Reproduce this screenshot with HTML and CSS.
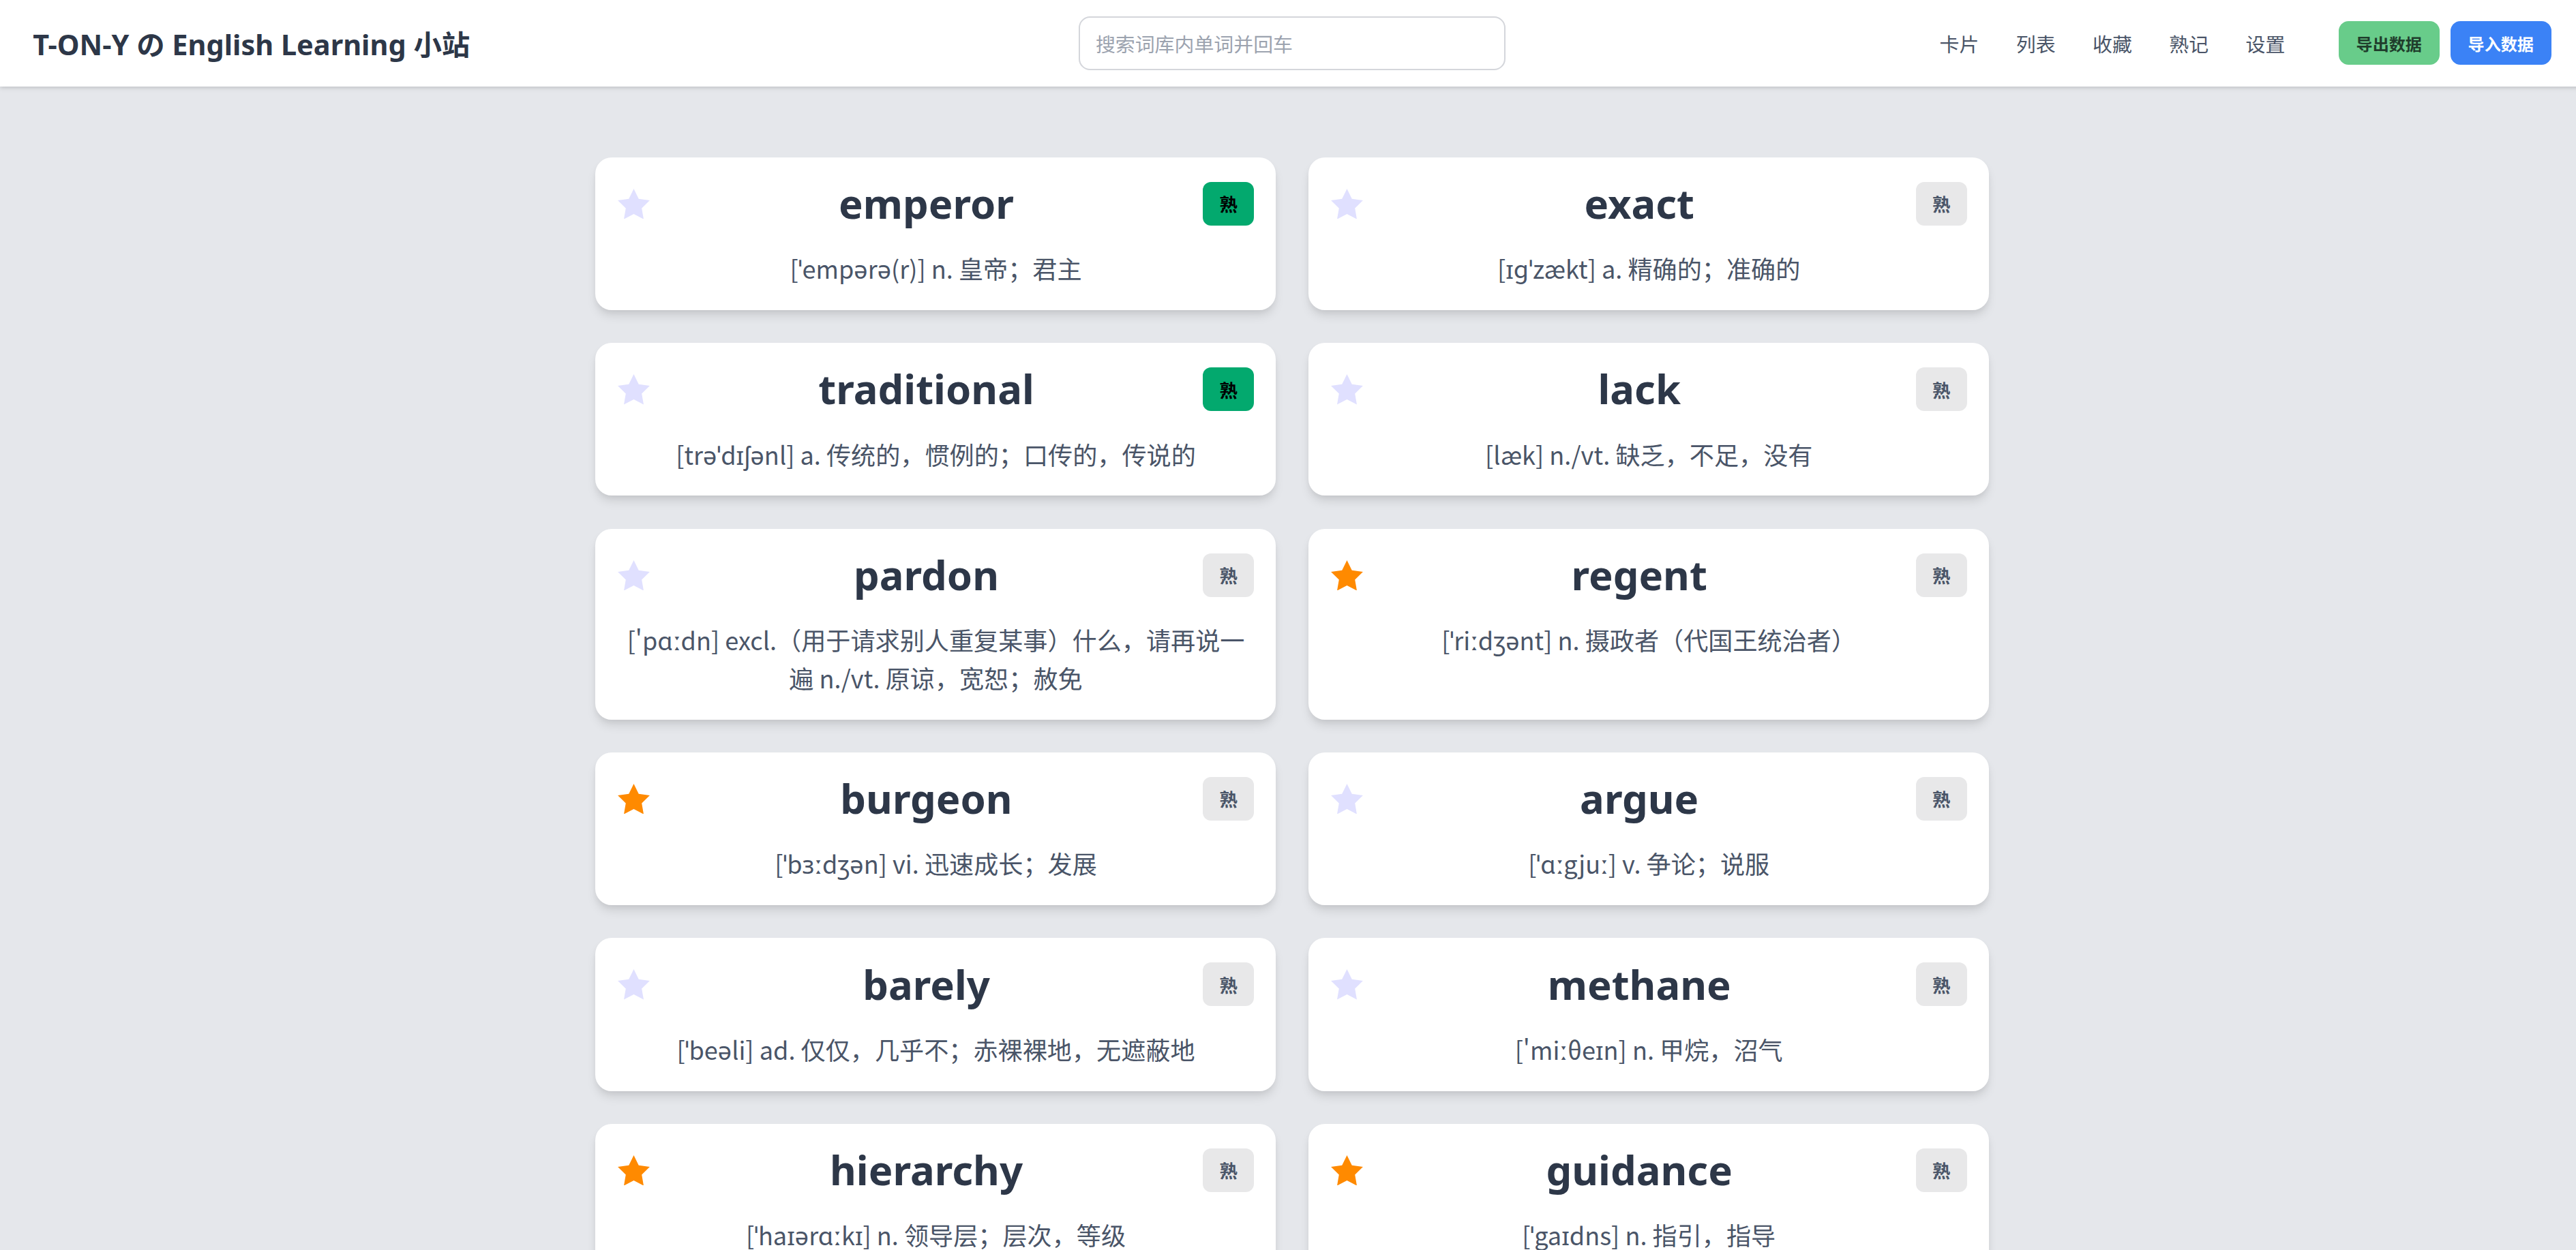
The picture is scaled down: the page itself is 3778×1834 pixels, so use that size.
FILE: index.html
```html
<!DOCTYPE html>
<html lang="zh-CN">
<head>
<meta charset="utf-8">
<title>T-ON-Y の English Learning 小站</title>
<link rel="stylesheet" href="styles.css">
</head>
<body>
<header class="topbar">
  <div class="brand">T-ON-Y の English Learning 小站</div>
  <div class="search-wrap">
    <input class="search" type="text" placeholder="搜索词库内单词并回车">
  </div>
  <div class="actions">
    <nav class="nav">
      <span>卡片</span><span>列表</span><span>收藏</span><span>熟记</span><span>设置</span>
    </nav>
    <button class="btn btn-export">导出数据</button>
    <button class="btn btn-import">导入数据</button>
  </div>
</header>

<main class="board">
  <div class="card">
    <div class="card-head">
      <svg class="star" viewBox="2 2 20 19.02"><polygon points="12,2 15.09,8.26 22,9.27 17,14.14 18.18,21.02 12,17.77 5.82,21.02 7,14.14 2,9.27 8.91,8.26"/></svg>
      <div class="word">emperor</div>
      <div class="badge on">熟</div>
    </div>
    <div class="def">[ˈempərə(r)] n. 皇帝；君主</div>
  </div>
  <div class="card">
    <div class="card-head">
      <svg class="star" viewBox="2 2 20 19.02"><polygon points="12,2 15.09,8.26 22,9.27 17,14.14 18.18,21.02 12,17.77 5.82,21.02 7,14.14 2,9.27 8.91,8.26"/></svg>
      <div class="word">exact</div>
      <div class="badge">熟</div>
    </div>
    <div class="def">[ɪɡˈzækt] a. 精确的；准确的</div>
  </div>

  <div class="card">
    <div class="card-head">
      <svg class="star" viewBox="2 2 20 19.02"><polygon points="12,2 15.09,8.26 22,9.27 17,14.14 18.18,21.02 12,17.77 5.82,21.02 7,14.14 2,9.27 8.91,8.26"/></svg>
      <div class="word">traditional</div>
      <div class="badge on">熟</div>
    </div>
    <div class="def">[trəˈdɪʃənl] a. 传统的，惯例的；口传的，传说的</div>
  </div>
  <div class="card">
    <div class="card-head">
      <svg class="star" viewBox="2 2 20 19.02"><polygon points="12,2 15.09,8.26 22,9.27 17,14.14 18.18,21.02 12,17.77 5.82,21.02 7,14.14 2,9.27 8.91,8.26"/></svg>
      <div class="word">lack</div>
      <div class="badge">熟</div>
    </div>
    <div class="def">[læk] n./vt. 缺乏，不足，没有</div>
  </div>

  <div class="card">
    <div class="card-head">
      <svg class="star" viewBox="2 2 20 19.02"><polygon points="12,2 15.09,8.26 22,9.27 17,14.14 18.18,21.02 12,17.77 5.82,21.02 7,14.14 2,9.27 8.91,8.26"/></svg>
      <div class="word">pardon</div>
      <div class="badge">熟</div>
    </div>
    <div class="def">['pɑːdn] excl.（用于请求别人重复某事）什么，请再说一遍 n./vt. 原谅，宽恕；赦免</div>
  </div>
  <div class="card">
    <div class="card-head">
      <svg class="star on" viewBox="2 2 20 19.02"><polygon points="12,2 15.09,8.26 22,9.27 17,14.14 18.18,21.02 12,17.77 5.82,21.02 7,14.14 2,9.27 8.91,8.26"/></svg>
      <div class="word">regent</div>
      <div class="badge">熟</div>
    </div>
    <div class="def">[ˈriːdʒənt] n. 摄政者（代国王统治者）</div>
  </div>

  <div class="card">
    <div class="card-head">
      <svg class="star on" viewBox="2 2 20 19.02"><polygon points="12,2 15.09,8.26 22,9.27 17,14.14 18.18,21.02 12,17.77 5.82,21.02 7,14.14 2,9.27 8.91,8.26"/></svg>
      <div class="word">burgeon</div>
      <div class="badge">熟</div>
    </div>
    <div class="def">[ˈbɜːdʒən] vi. 迅速成长；发展</div>
  </div>
  <div class="card">
    <div class="card-head">
      <svg class="star" viewBox="2 2 20 19.02"><polygon points="12,2 15.09,8.26 22,9.27 17,14.14 18.18,21.02 12,17.77 5.82,21.02 7,14.14 2,9.27 8.91,8.26"/></svg>
      <div class="word">argue</div>
      <div class="badge">熟</div>
    </div>
    <div class="def">[ˈɑːgjuː] v. 争论；说服</div>
  </div>

  <div class="card">
    <div class="card-head">
      <svg class="star" viewBox="2 2 20 19.02"><polygon points="12,2 15.09,8.26 22,9.27 17,14.14 18.18,21.02 12,17.77 5.82,21.02 7,14.14 2,9.27 8.91,8.26"/></svg>
      <div class="word">barely</div>
      <div class="badge">熟</div>
    </div>
    <div class="def">[ˈbeəli] ad. 仅仅，几乎不；赤裸裸地，无遮蔽地</div>
  </div>
  <div class="card">
    <div class="card-head">
      <svg class="star" viewBox="2 2 20 19.02"><polygon points="12,2 15.09,8.26 22,9.27 17,14.14 18.18,21.02 12,17.77 5.82,21.02 7,14.14 2,9.27 8.91,8.26"/></svg>
      <div class="word">methane</div>
      <div class="badge">熟</div>
    </div>
    <div class="def">['miːθeɪn] n. 甲烷，沼气</div>
  </div>

  <div class="card">
    <div class="card-head">
      <svg class="star on" viewBox="2 2 20 19.02"><polygon points="12,2 15.09,8.26 22,9.27 17,14.14 18.18,21.02 12,17.77 5.82,21.02 7,14.14 2,9.27 8.91,8.26"/></svg>
      <div class="word">hierarchy</div>
      <div class="badge">熟</div>
    </div>
    <div class="def">[ˈhaɪərɑːkɪ] n. 领导层；层次，等级</div>
  </div>
  <div class="card">
    <div class="card-head">
      <svg class="star on" viewBox="2 2 20 19.02"><polygon points="12,2 15.09,8.26 22,9.27 17,14.14 18.18,21.02 12,17.77 5.82,21.02 7,14.14 2,9.27 8.91,8.26"/></svg>
      <div class="word">guidance</div>
      <div class="badge">熟</div>
    </div>
    <div class="def">[ˈgaɪdns] n. 指引，指导</div>
  </div>
</main>
</body>
</html>
```

FILE: styles.css
```css
html {
  zoom: 2.4094;
  overflow: hidden;
}

body {
  margin: 0;
  width: 1573px;
  background: #e5e7eb;
  font-family: "Noto Sans", "Noto Sans CJK SC", sans-serif;
}

.topbar {
  position: relative;
  z-index: 1;
  box-sizing: border-box;
  height: 52.6px;
  padding: 0 20px;
  display: flex;
  align-items: center;
  background: #fff;
  box-shadow: 0 1px 3px rgba(0, 0, 0, 0.12), 0 1px 2px rgba(0, 0, 0, 0.06);
}

.brand,
.search-wrap,
.actions {
  flex: 1 1 0;
  min-width: 0;
}

.brand {
  font-size: 17.2px;
  font-weight: 700;
  color: #2d3748;
  white-space: nowrap;
}

.search-wrap {
  display: flex;
  justify-content: center;
}

.search {
  box-sizing: border-box;
  width: 260px;
  height: 32.5px;
  padding: 0 9.6px;
  border: 1px solid #d4d6db;
  border-radius: 7px;
  font-family: "Noto Sans CJK SC", sans-serif;
  font-size: 12px;
  color: #374151;
  background: #fff;
  outline: none;
}

.search::placeholder {
  color: #9ca3af;
}

.actions {
  display: flex;
  justify-content: flex-end;
  align-items: center;
}

.nav {
  display: flex;
  gap: 22.6px;
  margin-right: 32.5px;
  font-family: "Noto Sans CJK SC", sans-serif;
  font-size: 12px;
  color: #4a5568;
  white-space: nowrap;
}

.btn {
  height: 26.5px;
  padding: 0 10.75px;
  border: 0;
  border-radius: 6px;
  font-family: "Noto Sans CJK SC", sans-serif;
  font-size: 10px;
  font-weight: 700;
  white-space: nowrap;
  cursor: pointer;
}

.btn-export {
  background: #68cc8a;
  color: #1f3d2c;
}

.btn-import {
  margin-left: 6.6px;
  background: #3b82f6;
  color: #fff;
}

.board {
  width: 848px;
  margin: 43.15px auto 0;
  display: grid;
  grid-template-columns: 1fr 1fr;
  gap: 20px;
}

.card {
  padding: 15px 13.2px 13.7px 13.5px;
  background: #fff;
  border-radius: 10px;
  box-shadow: 0 4px 6px -1px rgba(0, 0, 0, 0.1), 0 2px 4px -1px rgba(0, 0, 0, 0.06);
}

.card-head {
  display: flex;
  align-items: center;
  height: 26.6px;
}

.star {
  flex: none;
  width: 19.5px;
  height: 18.5px;
  fill: #e0e0ff;
}

.star.on {
  fill: #ff8a00;
}

.word {
  flex: 1;
  text-align: center;
  font-size: 24.8px;
  font-weight: 700;
  line-height: 1;
  color: #2d3748;
  white-space: nowrap;
}

.badge {
  flex: none;
  width: 31.1px;
  height: 26.6px;
  display: flex;
  align-items: center;
  justify-content: center;
  border-radius: 5px;
  background: #e8e8e9;
  color: #4a5568;
  font-family: "Noto Sans CJK SC", sans-serif;
  font-size: 11px;
  font-weight: 700;
}

.badge.on {
  background: #03a96e;
  color: #000;
}

.def {
  margin-top: 14.7px;
  text-align: center;
  font-family: "Noto Sans CJK SC", "Noto Sans", sans-serif;
  font-size: 15px;
  line-height: 23.1px;
  color: #4a5568;
}
```
